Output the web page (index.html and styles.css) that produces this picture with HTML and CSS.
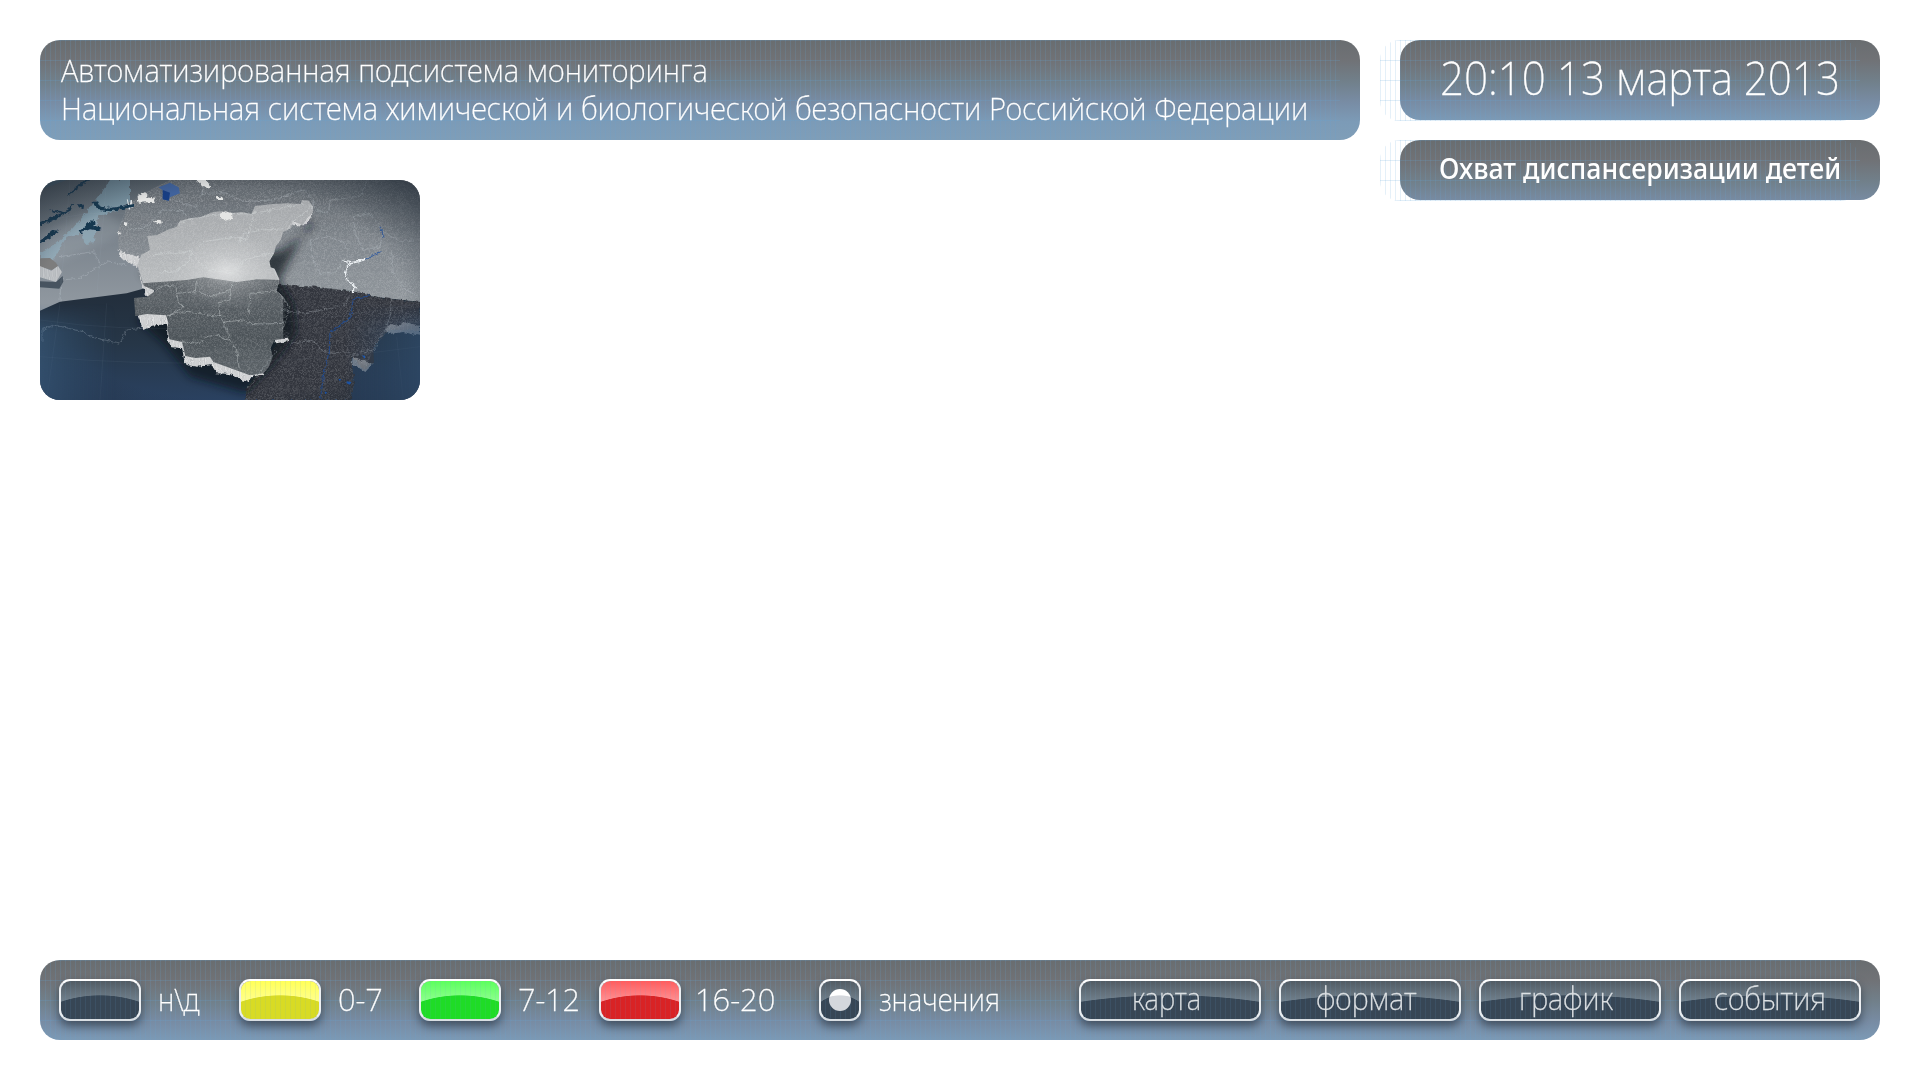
FILE: index.html
```
<!DOCTYPE html>
<html lang="ru">
<head>
<meta charset="utf-8">
<title>Мониторинг</title>
<link rel="stylesheet" href="styles.css">
</head>
<body>
<header class="top">
  <div class="left">
    <h1 class="panel title">
      <span class="fit title-a">Автоматизированная подсистема мониторинга</span>
      <span class="fit title-b">Национальная система химической и биологической безопасности Российской Федерации</span>
    </h1>
    <svg class="map" viewBox="30 30 1140 660">
      <defs>
        <linearGradient id="sky" x1="0" y1="0" x2="0" y2="1"><stop offset="0" stop-color="#545d65"/><stop offset=".28" stop-color="#7c858e"/><stop offset=".55" stop-color="#8f979f"/></linearGradient>
        <linearGradient id="sea" x1="0" y1="0" x2="0" y2="1"><stop offset="0" stop-color="#222d3a"/><stop offset=".5" stop-color="#263647"/><stop offset="1" stop-color="#2a4160"/></linearGradient>
        <linearGradient id="pale" x1="0" y1="0" x2="0" y2="1"><stop offset="0" stop-color="#a3a6a9"/><stop offset="1" stop-color="#b9bcbe"/></linearGradient>
        <linearGradient id="dark" x1="0" y1="0" x2="0" y2="1"><stop offset="0" stop-color="#60666b"/><stop offset=".55" stop-color="#4c5358"/><stop offset="1" stop-color="#60676c"/></linearGradient>
        <linearGradient id="east" x1="0" y1="0" x2="0" y2="1"><stop offset="0" stop-color="#5f656b"/><stop offset=".5" stop-color="#80868c"/><stop offset="1" stop-color="#90969b"/></linearGradient>
        <linearGradient id="blue" x1="0" y1="0" x2="1" y2="0"><stop offset="0" stop-color="#46739f" stop-opacity=".4"/><stop offset=".2" stop-color="#355f8c" stop-opacity="0"/><stop offset=".8" stop-color="#355f8c" stop-opacity="0"/><stop offset="1" stop-color="#3c6797" stop-opacity=".35"/></linearGradient>
        <linearGradient id="rise" x1="0" y1="0" x2="0" y2="1"><stop offset="0" stop-color="#fff" stop-opacity="0"/><stop offset=".3" stop-color="#fff"/></linearGradient>
        <mask id="low"><path d="M30 400H1170V690H30Z" fill="url(#rise)"/></mask>
        <radialGradient id="glow"><stop offset="0" stop-color="#fff" stop-opacity=".5"/><stop offset=".4" stop-color="#fff" stop-opacity=".2"/><stop offset="1" stop-color="#fff" stop-opacity="0"/></radialGradient>
        <radialGradient id="edge" cx=".48" cy=".52" r=".7"><stop offset=".68" stop-color="#202a35" stop-opacity="0"/><stop offset="1" stop-color="#202a35" stop-opacity=".65"/></radialGradient>
        <pattern id="cells" width="66" height="58" patternUnits="userSpaceOnUse" patternTransform="scale(.5)"><path d="M0 12L14 6L28 16L24 32L8 36L0 28M28 16L44 8L58 18L54 34L38 40L24 32M58 18L66 12M54 34L66 28M8 36L12 50L2 58M12 50L30 48L38 40M30 48L36 58M54 34L56 50L66 56M56 50L48 58M44 8L36 0M14 6L2 0M48 0L44 8" fill="none" stroke="#fff" stroke-opacity=".2" stroke-width="3.4"/></pattern>
        <pattern id="ribs" width="13" height="40" patternUnits="userSpaceOnUse"><path d="M0 0H13V40H0Z" fill="#dfe0e1"/><path d="M3 0L6 40M10 0L11 40" stroke="#a5a8ab" stroke-width="1.8"/></pattern>
        <filter id="soft" x="-20%" y="-20%" width="140%" height="140%"><feGaussianBlur stdDeviation="13"/></filter>
        <filter id="rough" x="-5%" y="-5%" width="110%" height="110%"><feTurbulence type="fractalNoise" baseFrequency=".11" numOctaves="2" seed="4" result="n"/><feDisplacementMap in="SourceGraphic" in2="n" scale="26" xChannelSelector="R" yChannelSelector="G"/></filter>
        <filter id="wavy" x="-5%" y="-5%" width="110%" height="110%"><feTurbulence type="fractalNoise" baseFrequency=".09" numOctaves="2" seed="9" result="n"/><feDisplacementMap in="SourceGraphic" in2="n" scale="14" xChannelSelector="R" yChannelSelector="G"/></filter>
        <clipPath id="main"><path d="M352 198L380 196L412 180L440 170L450 152L480 145L510 142L550 126L575 124L600 130L636 126L664 132L675 108L720 103L770 100L812 102L816 90L836 92L850 110L848 128L830 146L818 166L788 152L784 174L760 186L752 210L738 228L732 250L718 274L722 292L734 296L748 328L740 362L760 380L780 412L770 450L760 478L778 490L776 505L734 510L722 534L728 560L716 592L700 610L660 616L600 594L550 576L540 560L496 564L466 558L456 516L418 508L412 474L415 458L408 436L350 432L316 438L312 384L352 380L376 362L342 348L322 284L334 254L360 240Z"/></clipPath>
        <clipPath id="land"><path d="M290 110L330 75L380 50L420 30H1170V460L1075 480L1030 535L1010 590L965 560L972 645L962 690H645L650 655L740 520L680 420L330 290L266 240L264 180Z"/></clipPath>
      </defs>
      <path d="M30 30H1170V690H30Z" fill="url(#sky)"/>
      <path d="M30 250Q120 210 240 30H300V95Q260 130 205 138L190 220L160 222L155 190L110 200L66 275H30Z" fill="#8cb5c9" opacity=".5" filter="url(#wavy)"/>
      <path d="M30 60L110 30H30Z" fill="#49677b" opacity=".7"/>
      <path d="M30 190L210 120L300 180L30 300Z" fill="#d2dbe0" opacity=".14" filter="url(#soft)"/>
      <path d="M30 422L90 395L290 370L380 345L720 345L1170 395V690H30Z" fill="url(#sea)"/>
      <path d="M290 110L330 75L380 50L420 30H1170V395L730 345L330 290L300 270L266 240L264 180L282 145Z" fill="url(#east)" opacity=".9"/>
      <path d="M266 240L290 250L330 262L322 292L300 280L274 268ZM322 286L342 350L376 378L352 382L334 340Z" fill="url(#ribs)" filter="url(#wavy)"/>
      <path d="M720 343L860 350L980 366L1060 384L1170 396V480L1075 480L1030 535L1032 575L1000 600L965 560L972 645L962 690H645L650 655L740 520L680 420Z" fill="#30363d" filter="url(#wavy)"/>
      <g clip-path="url(#land)"><path d="M200 0H1200V720H200Z" fill="url(#cells)" filter="url(#rough)"/></g>
      <path d="M330 310L440 380L320 450L400 520L480 620L650 670L740 570L800 490L790 400L748 330L840 150L850 170L760 240Z" fill="#07121d" opacity=".7" filter="url(#soft)"/>
      <path d="M316 420L340 480L366 467L412 462L412 508L424 532L456 534L466 584L500 590L545 586L560 610L600 612L655 638L668 620L700 612V590L560 560L430 430ZM734 506H776V514L738 520ZM340 340L350 380L376 372L362 345ZM786 152L820 152L848 122V134L826 166L788 166Z" fill="url(#ribs)" filter="url(#wavy)"/>
      <g clip-path="url(#main)">
        <path d="M260 80H870V345H260Z" fill="url(#pale)"/>
        <path d="M260 345L400 335L470 330L520 322L620 336L680 328L760 330V640H260Z" fill="url(#dark)"/>
        <path d="M240 60H890V710H240Z" fill="url(#cells)" filter="url(#rough)"/>
        <ellipse cx="590" cy="302" rx="170" ry="115" fill="url(#glow)"/>
        <path d="M352 198L480 145L600 130L664 132L812 102L850 110L788 152L718 274L748 328L740 362L780 412L770 450L760 478M372 254L430 248L480 244L482 270L440 302L390 306M500 240L520 215L610 202L650 210L664 160L675 120M630 215L640 190L700 180L760 176M482 244L510 280L540 300L610 310L640 270L720 250M500 332L496 360L540 380L600 362L610 334M376 362L410 345L438 350L440 370L500 365M440 370L446 400L462 410L412 440L450 425L520 432L570 440L566 395L600 390L603 360M570 440L580 456L640 450L660 460L700 462L760 460M655 430L660 370L740 362M580 456L600 510L560 495L530 500L510 520L456 516M600 510L620 540L628 596M740 362L760 380L780 412" fill="none" stroke="#e2e5e7" stroke-opacity=".5" stroke-width="2.2" filter="url(#wavy)"/>
      </g>
      <path d="M420 88L500 110L516 70L580 68L640 94L730 90L820 60L850 90L850 120M300 180L350 170L396 120L460 122L470 140M516 70L520 50M855 120L895 130L900 90L990 80L1010 35M970 140L1020 130L1060 185L1050 230L1000 240L975 190L970 140M840 210L900 200L940 215L955 240M840 210L850 270L870 310L920 305L940 270M1060 185L1110 215L1150 210M1085 245L1090 310L1130 360L1170 385M750 420L830 430L900 415L950 400L955 380M1085 385L1080 440L1065 480L1030 540L1000 545L960 560M780 520L850 510L880 545L960 550M90 395L92 330L150 325L230 275L290 285M90 260L190 245L210 280M36 515L36 480L70 465L160 485L180 500L270 520L290 480L335 475M650 655L662 645L740 540" fill="none" stroke="#ccd5dc" stroke-opacity=".36" stroke-width="2.2" filter="url(#wavy)"/>
      <path d="M940 270L960 275L1004 268L990 274L956 282L946 310L952 330L972 345L970 370M966 345L982 355" fill="none" stroke="#edf1f4" stroke-width="3.5" filter="url(#wavy)"/>
      <path d="M1004 268L1058 245M1062 200L1050 170M1020 378L970 385L962 440L900 490L898 545L880 620L872 684" fill="none" stroke="#1b4d9e" stroke-opacity=".7" stroke-width="3.5" filter="url(#wavy)"/>
      <path d="M925 626l8 2-3 6zM950 634l14 2-4 8-10-4zM884 664l8 4-6 5zM996 556l10 2-2 8z" fill="#1957b5"/>
      <path d="M386 52L420 38L446 52L450 70L420 82L416 92L398 88L400 62Z" fill="#40629c"/><path d="M398 60L420 68L416 92L398 88Z" fill="#173e83"/>
      <path d="M322 78L346 66L350 82L376 86L370 96L326 98ZM498 30H530L542 50L526 54ZM558 82L576 80L582 90L562 90ZM568 132L586 124L606 130L608 146L584 152L570 142ZM372 154L396 150L398 160L378 162ZM282 156l10 2-2 10-8-4zM264 182l10 6-6 10z" fill="#e4e5e4" filter="url(#wavy)"/>
      <path d="M292 88L298 118L304 90L306 114" fill="none" stroke="#e6e9eb" stroke-width="3"/>
      <path d="M30 168L84 144L124 120L130 98L122 104L116 118L80 136L30 156ZM112 82L140 58L172 34L184 30H164L140 50L114 72ZM144 102l18 2-2 12-10-4zM184 96l20-2 8 16 30 4 70-12v8l-70 14-36-4zM56 118l40 6-10 6zM30 212L70 180L88 182L60 204L34 220ZM146 184L160 174L186 150L194 158L190 168L214 176L204 182L180 178L150 190Z" fill="#193750" filter="url(#wavy)"/>
      <path d="M30 265L60 264L78 278L84 288L66 300L30 290Z" fill="#7d7d7d"/><path d="M30 288L64 302L84 288L96 306L78 336L30 322Z" fill="url(#ribs)" opacity=".72"/><path d="M30 334L78 336L98 318L100 335L88 356L30 352Z" fill="#1b2a39" opacity=".6"/>
      <path d="M1065 480L1082 462L1106 468L1126 456L1170 468V498L1120 486L1080 492ZM968 560L1000 572L1028 582L1006 606L966 580Z" fill="url(#ribs)" opacity=".45" filter="url(#wavy)"/>
      <path d="M30 450Q500 520 1170 400M30 560Q600 610 1170 530M90 400L50 690M230 400L210 690M1100 500L1120 690M30 160Q160 120 290 130M120 30L90 390M230 30L200 380" fill="none" stroke="#b9d0e2" stroke-opacity=".09" stroke-width="2"/>
      <path d="M30 30H1170V690H30Z" fill="url(#edge)"/>
      <path d="M30 400H1170V690H30Z" fill="url(#blue)" mask="url(#low)"/>
    </svg>
  </div>
  <aside class="right">
    <div class="panel clock"><span class="fit">20:10 13 марта 2013</span></div>
    <div class="panel topic"><span class="fit">Охват диспансеризации детей</span></div>
  </aside>
</header>
<footer class="panel bar">
  <div class="legend"><i class="glass"></i><span class="fit l1">н\д</span></div>
  <div class="legend"><i class="glass yellow"></i><span class="fit l2">0-7</span></div>
  <div class="legend"><i class="glass green"></i><span class="fit l3">7-12</span></div>
  <div class="legend wide"><i class="glass red"></i><span class="fit l4">16-20</span></div>
  <div class="legend check"><i class="glass box"></i><span class="fit l5">значения</span></div>
  <nav class="nav">
    <a class="glass"><span class="fit b1">карта</span></a>
    <a class="glass"><span class="fit b2">формат</span></a>
    <a class="glass"><span class="fit b3">график</span></a>
    <a class="glass"><span class="fit b4">события</span></a>
  </nav>
</footer>
<script src="fit.js"></script>
</body>
</html>
```
FILE: styles.css
```
* { box-sizing: border-box; }
body {
  margin: 0;
  width: 1920px;
  height: 1080px;
  padding: 40px;
  display: flex;
  flex-direction: column;
  justify-content: space-between;
  overflow: hidden;
  background: #fff;
  color: #fff;
  font: 200 32px/38px "Noto Sans", sans-serif;
}
.top { display: flex; gap: 40px; }
.left { width: 1320px; display: flex; flex-direction: column; gap: 40px; }
.right { width: 480px; display: flex; flex-direction: column; gap: 20px; }

.panel {
  position: relative;
  margin: 0;
  border-radius: 20px;
  background: linear-gradient(#696d70, #707276 20px, #71808b 42px, #788ca4 62px, #7c9bb7 82px, #7f9eb8 100px);
}
.panel::after {
  content: "";
  position: absolute;
  inset: 0 20px -1px -20px;
  border-radius: 20px;
  pointer-events: none;
  background:
    linear-gradient(rgba(100, 168, 218, .2) 1px, transparent 1px) 0 0 / 5px 20px,
    linear-gradient(90deg, rgba(100, 168, 218, .17) 1px, transparent 1px) 0 0 / 5px 20px;
}
.title::after, .bar::after { left: 0; bottom: 0; border-radius: 20px 0 0 20px; }

.fit {
  display: block;
  width: max-content;
  white-space: nowrap;
  transform-origin: 0 50%;
  position: relative;
  z-index: 1;
  -webkit-text-stroke: .3px currentColor;
}
.title { height: 100px; padding: 11px 21px; font: inherit; }
.map { display: block; width: 380px; height: 220px; border-radius: 20px; }
.clock { height: 80px; padding: 7px 0 0 40px; font-size: 46px; line-height: 60px; }
.topic { height: 60px; padding: 8px 0 0 39px; font-size: 29px; line-height: 40px; font-weight: 500; }
.topic .fit { -webkit-text-stroke: 0; }

.bar { height: 80px; padding: 19px 19px 0; display: flex; }
.legend { width: 180px; display: flex; gap: 17px; }
.legend .fit { line-height: 39px; }
.wide { width: 220px; gap: 14px; }
.check { width: 260px; gap: 18px; }

.glass {
  --low: #374655;
  --top: #525c64;
  --mid: #707f8b;
  position: relative;
  z-index: 1;
  width: 82px;
  height: 42px;
  flex: none;
  border: 2px solid;
  border-color: #fff #eceff2 #d9dee3;
  border-radius: 11px;
  background:
    linear-gradient(90deg, rgba(100, 168, 218, .11) 1px, transparent 1px) 4px 0 / 5px 20px padding-box,
    radial-gradient(ellipse 120% 70px at 50% 84px, var(--low) 99%, transparent 100%) padding-box,
    linear-gradient(var(--top), var(--mid) 20px) padding-box;
  box-shadow: 0 5px 10px rgba(20, 30, 40, .55);
}
.yellow { --low: #d8db24; --top: #ffff58; --mid: #ffff8c; }
.green { --low: #1fdc26; --top: #5cff5c; --mid: #8cff8e; }
.red { --low: #d92325; --top: #ff5c5e; --mid: #ff9092; }
.box { width: 42px; display: grid; place-items: center; }
.box::before { content: ""; width: 22px; height: 22px; border-radius: 50%; background: radial-gradient(circle 40px at 50% 46px, #d4d7dc 98%, #fff 100%); }
.nav { display: flex; gap: 18px; }
.nav .glass { width: 182px; color: #dde1e4; }
.nav .fit { line-height: 33px; }
.b1 { margin-left: 51px; } .b2 { margin-left: 35px; } .b3 { margin-left: 38px; } .b4 { margin-left: 33px; }
```
FILE: fit.js
```
// Condense each label to its designed width.
var widths = {
  '.title-a': 647, '.title-b': 1247, '.clock .fit': 400, '.topic .fit': 402,
  '.l1': 42, '.l2': 45, '.l3': 62, '.l4': 80, '.l5': 121,
  '.b1': 69, '.b2': 101, '.b3': 94, '.b4': 112
};
Object.keys(widths).forEach(function (key) {
  var el = document.querySelector(key);
  el.style.transform = 'scaleX(' + widths[key] / el.offsetWidth + ')';
});
```
